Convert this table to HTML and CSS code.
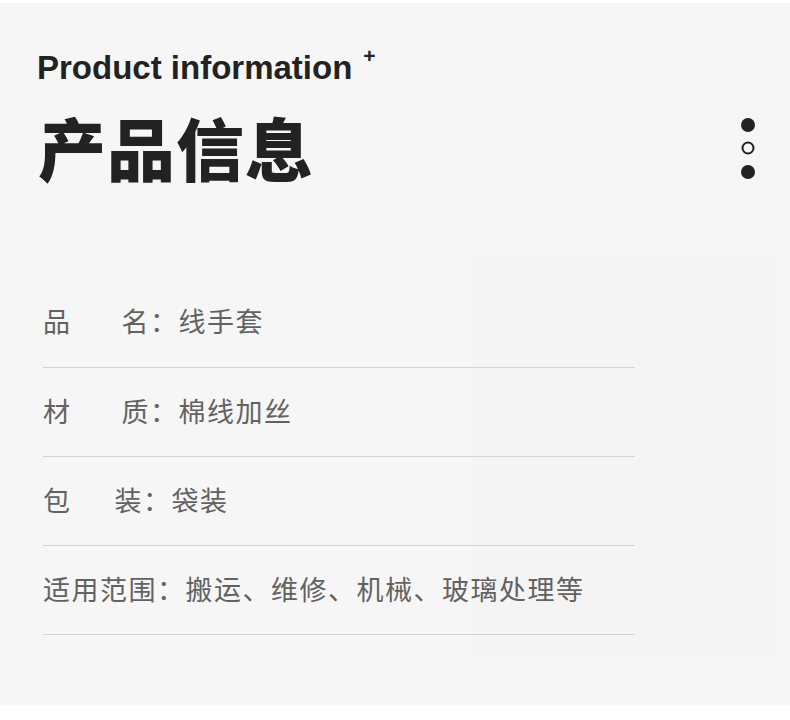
FILE: index.html
```html
<!DOCTYPE html>
<html lang="zh-CN">
<head>
    <meta charset="UTF-8">
    <meta name="viewport" content="width=device-width, initial-scale=1.0">
    <title>产品信息</title>
    <link rel="stylesheet" href="styles.css">
</head>
<body>
    <div class="page">
        <div class="shade"></div>

        <header class="head">
            <div class="titles">
                <p class="en">Product information<sup>+</sup></p>
                <h1>产品信息</h1>
            </div>
            <svg class="dots" width="18" height="62" viewBox="0 0 18 62">
                <circle cx="9" cy="8" r="7" fill="#222"/>
                <circle cx="9" cy="31" r="5.5" fill="none" stroke="#222" stroke-width="2"/>
                <circle cx="9" cy="55" r="7" fill="#222"/>
            </svg>
        </header>

        <ul class="info">
            <li><span class="key key-a"><span>品</span><span>名</span></span>：线手套</li>
            <li><span class="key key-a"><span>材</span><span>质</span></span>：棉线加丝</li>
            <li><span class="key key-b"><span>包</span><span>装</span></span>：袋装</li>
            <li><span class="key">适用范围</span>：搬运、维修、机械、玻璃处理等</li>
        </ul>
    </div>
</body>
</html>
```

FILE: styles.css
```css
/* Base */
body {
    margin: 0;
    background: #fff;
    font-family: "Liberation Sans", "Noto Sans CJK SC", sans-serif;
    color: #222;
}

.page {
    position: relative;
    margin-top: 3px;
    height: 702px;
    background: #f6f6f6;
    padding: 0 0 0 37px;
    box-sizing: border-box;
    overflow: hidden;
}

/* faint panel behind the right side */
.shade {
    position: absolute;
    left: 474px;
    top: 255px;
    width: 304px;
    height: 400px;
    background: #f4f4f4;
}

/* Header */
.head {
    display: flex;
    justify-content: space-between;
    align-items: flex-start;
    padding-top: 37px;
    padding-right: 33px;
}

.en {
    margin: 0;
    font-size: 33px;
    font-weight: bold;
    line-height: 40px;
    color: #222;
}

.en sup {
    font-size: 21px;
    margin-left: 11px;
    position: relative;
    top: -4px;
}

h1 {
    margin: 21px 0 0 1px;
    font-family: "Noto Sans CJK SC", sans-serif;
    font-size: 68px;
    font-weight: 900;
    line-height: 76px;
    letter-spacing: 1px;
    color: #222;
}

.dots {
    margin-top: 77px;
}

/* Info rows */
.info {
    position: relative;
    list-style: none;
    margin: 92px 0 0 6px;
    padding: 0;
    width: 592px;
}

.info li {
    display: flex;
    align-items: center;
    height: 89px;
    padding-bottom: 3px;
    box-sizing: border-box;
    border-bottom: 1.5px solid #d2d2d2;
    font-family: "Noto Sans CJK SC", sans-serif;
    font-size: 27px;
    color: #626262;
    letter-spacing: 1.5px;
}

.info li:first-child {
    height: 91px;
    padding-bottom: 4px;
}

.key {
    display: inline-flex;
    justify-content: space-between;
}

.key-a {
    width: 107px;
}

.key-b {
    width: 100px;
}
```
